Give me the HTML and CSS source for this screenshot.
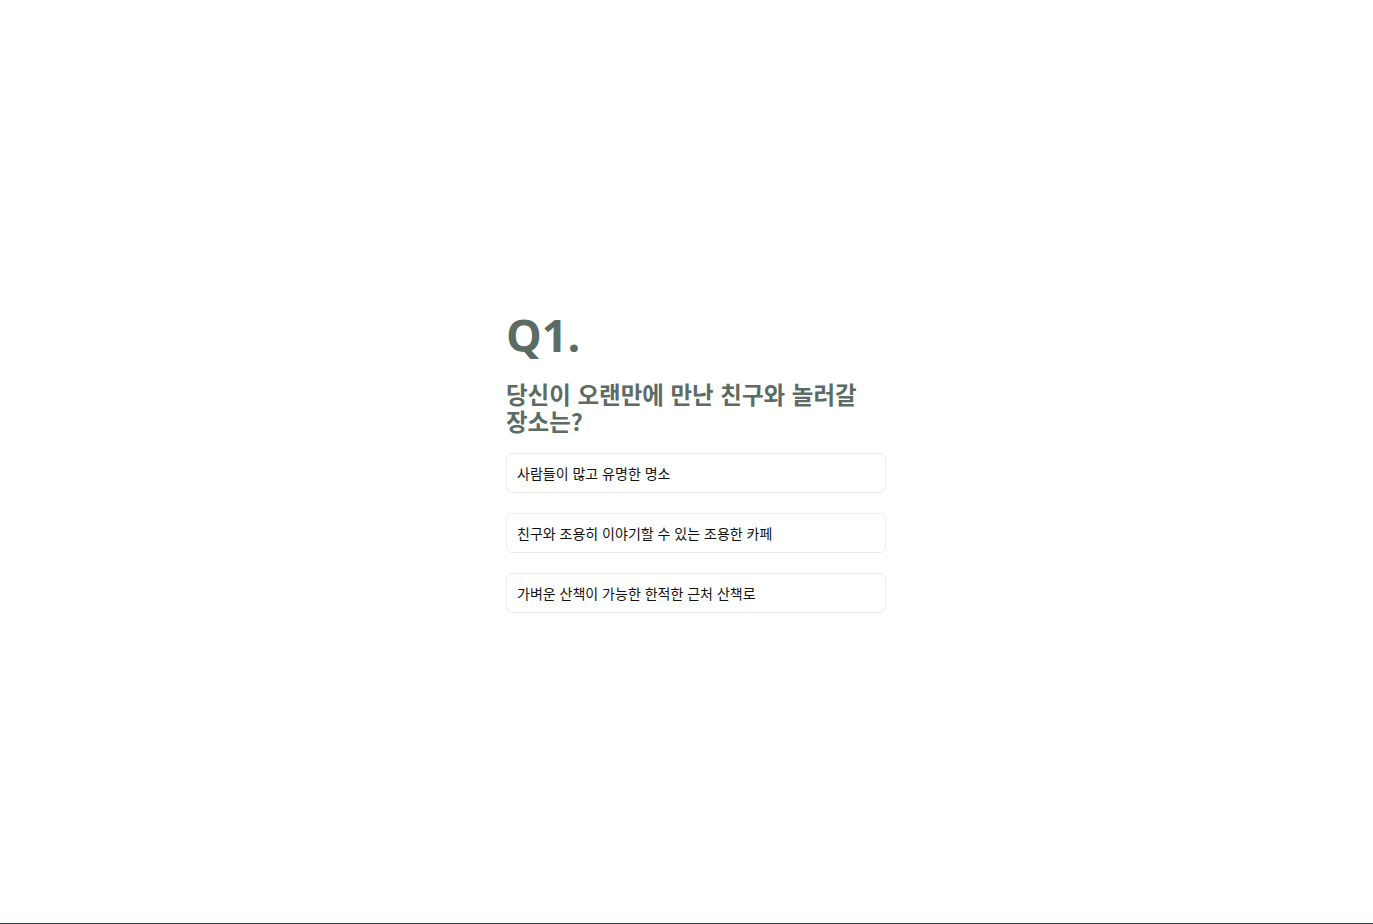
FILE: index.html
```html
<!DOCTYPE html>
<html lang="ko">
<head>
<meta charset="utf-8">
<title>Q1</title>
<link rel="stylesheet" href="styles.css">
</head>
<body>
<main class="page">
  <section class="quiz">
    <h1 class="quiz-number">Q1.</h1>
    <h2 class="quiz-question">당신이 오랜만에 만난 친구와 놀러갈 장소는?</h2>
    <ul class="options">
      <li class="option">사람들이 많고 유명한 명소</li>
      <li class="option">친구와 조용히 이야기할 수 있는 조용한 카페</li>
      <li class="option">가벼운 산책이 가능한 한적한 근처 산책로</li>
    </ul>
  </section>
</main>
<div class="bottom-bar"></div>
</body>
</html>
```
FILE: styles.css
```css
* { box-sizing: border-box; }
html, body { margin: 0; padding: 0; background: #fff; }
body {
  font-family: "Noto Sans CJK KR", "Noto Sans", sans-serif;
  display: flex;
  flex-direction: column;
  height: 100vh;
}
.page {
  flex: 1;
  display: flex;
  align-items: center;
  justify-content: center;
}
.quiz {
  width: 380px;
  display: flex;
  flex-direction: column;
  margin-left: 19px;
  margin-bottom: 6px;
}
.quiz-number {
  margin: 0;
  font-family: "Open Sans", "Noto Sans", sans-serif;
  font-size: 45px;
  font-weight: 700;
  line-height: 60px;
  color: #5d6b65;
}
.quiz-question {
  margin: 16px 0 0;
  font-size: 23.5px;
  font-weight: 700;
  line-height: 27px;
  color: #5d6b65;
  word-break: keep-all;
}
.options {
  list-style: none;
  margin: 18px 0 0;
  padding: 0;
  display: flex;
  flex-direction: column;
  gap: 20px;
}
.option {
  height: 40px;
  display: flex;
  align-items: center;
  padding: 0 10px;
  border: 1px solid #ececec;
  border-radius: 6px;
  font-size: 14px;
  color: #111;
}
.bottom-bar {
  height: 1px;
  background: #1d4a55;
}
```
